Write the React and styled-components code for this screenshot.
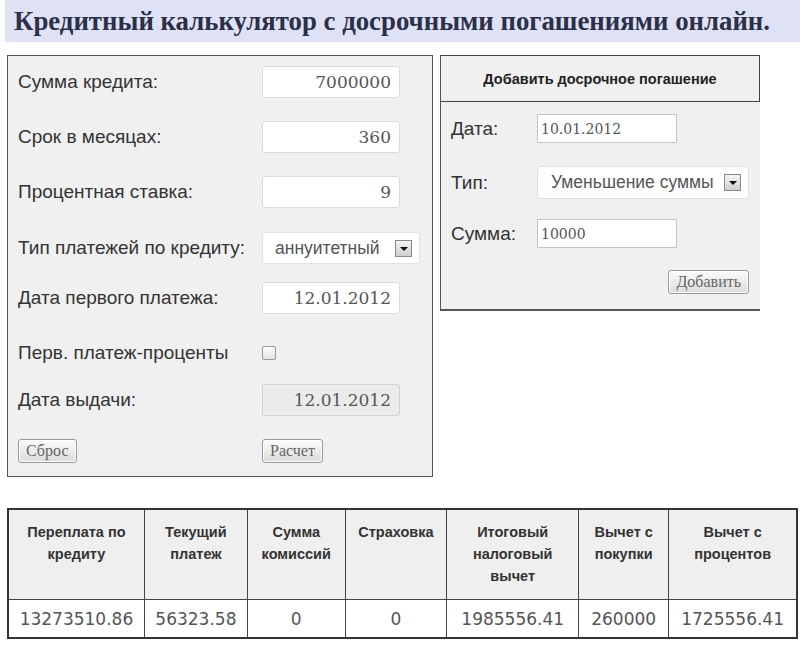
import styled, { createGlobalStyle } from 'styled-components';

const Global = createGlobalStyle`
  html, body {
    margin: 0;
    padding: 0;
    background: #ffffff;
  }
  body {
    width: 800px;
    height: 645px;
    overflow: hidden;
    font-family: "Liberation Sans", Arial, sans-serif;
  }
`;

const Page = styled.div`
  padding: 0 0 0 7px;
`;

const TitleBar = styled.div`
  margin-left: -2px;
  height: 42px;
  background: #dfe1f5;
  display: flex;
  align-items: center;
  padding-left: 9px;
  h1 {
    margin: 0;
    font-family: "Liberation Serif", "Times New Roman", serif;
    font-weight: bold;
    font-size: 26.8px;
    color: #2b3049;
    white-space: nowrap;
  }
`;

const TopRow = styled.div`
  display: flex;
  align-items: flex-start;
  gap: 7px;
  margin-top: 13px;
`;

const CalcPanel = styled.div`
  width: 424px;
  height: 420px;
  background: #f0f0f0;
  border: 1px solid #555;
  box-sizing: content-box;
`;

const Row = styled.div`
  display: flex;
  align-items: center;
  height: 32px;
  margin-top: ${p => p.$gap}px;
  padding-left: 10px;
`;

const Label = styled.div`
  width: ${p => p.$w || 244}px;
  font-size: 19px;
  color: #333;
  flex-shrink: 0;
  white-space: nowrap;
`;

const TextField = styled.div`
  width: 138px;
  height: 32px;
  box-sizing: border-box;
  background: ${p => (p.$disabled ? '#ebebeb' : '#fff')};
  border: 1px solid ${p => (p.$disabled ? '#d2d2d2' : '#dcdcdc')};
  border-radius: 3px;
  display: flex;
  align-items: center;
  justify-content: flex-end;
  padding-right: 8px;
  font-family: "DejaVu Serif", Georgia, serif;
  font-size: 17px;
  color: #555;
`;

const SelectBox = styled.div`
  width: ${p => p.$w}px;
  height: ${p => p.$h || 32}px;
  box-sizing: border-box;
  background: #fff;
  border: 1px solid #e0e0e0;
  border-radius: 3px;
  display: flex;
  align-items: center;
  justify-content: space-between;
  padding: 0 7px 0 ${p => p.$pl || 12}px;
  font-size: 17.5px;
  color: #555;
  white-space: nowrap;
`;

const Arrow = styled.span`
  width: 17px;
  height: 17px;
  box-sizing: border-box;
  border: 1px solid #888;
  background: linear-gradient(#f4f4f4, #cfcfcf);
  display: flex;
  align-items: center;
  justify-content: center;
  flex-shrink: 0;
  &::after {
    content: '';
    border-left: 4px solid transparent;
    border-right: 4px solid transparent;
    border-top: 4px solid #111;
    margin-top: 1px;
  }
`;

const Check = styled.span`
  width: 14px;
  height: 14px;
  box-sizing: border-box;
  border: 1px solid #999;
  border-radius: 2px;
  background: linear-gradient(#fdfdfd, #e4e4e4);
`;

const Button = styled.button`
  font-family: "Liberation Serif", "Times New Roman", serif;
  font-size: 16px;
  color: #666;
  padding: 0 7px;
  height: 24px;
  border: 1px solid #999;
  border-radius: 3px;
  background: linear-gradient(#fbfbfb, #dcdcdc);
  box-shadow: inset 0 0 0 1px #fff;
  cursor: pointer;
`;

const ButtonRow = styled.div`
  display: grid;
  grid-template-columns: ${p => p.$cols || '244px auto'};
  justify-content: ${p => p.$justify || 'start'};
  justify-items: start;
  align-items: center;
  margin-top: ${p => p.$gap}px;
  padding-left: ${p => p.$pl || 10}px;
  padding-right: ${p => p.$pr || 0}px;
`;

const EarlyPanel = styled.div`
  width: 319px;
  height: 254px;
  background: #f0f0f0;
  border-left: 1px solid #555;
  border-bottom: 2px solid #555;
`;

const EarlyHeader = styled.div`
  height: 45px;
  border: 1px solid #444;
  border-left: none;
  display: flex;
  align-items: center;
  justify-content: center;
  font-weight: bold;
  font-size: 14.5px;
  color: #222;
`;

const EarlyRow = styled.div`
  display: flex;
  align-items: center;
  margin-top: ${p => p.$gap}px;
  padding-left: 10px;
`;

const SmallField = styled.div`
  width: 140px;
  height: 29px;
  box-sizing: border-box;
  background: #fff;
  border: 1px solid #c4c4c4;
  display: flex;
  align-items: center;
  padding-left: 3px;
  font-family: "DejaVu Serif", Georgia, serif;
  font-size: 14px;
  color: #555;
`;

const ResultTable = styled.table`
  margin-top: 31px;
  width: 791px;
  border-collapse: collapse;
  border: 2px solid #333;
  th, td {
    border: 1px solid #444;
    text-align: center;
  }
  th {
    height: 78px;
    vertical-align: top;
    padding: 11px 4px 0;
    background: #efefef;
    font-size: 14.5px;
    line-height: 22px;
    font-weight: bold;
    color: #333;
  }
  td {
    height: 37px;
    padding: 0;
    font-family: "DejaVu Sans", Verdana, sans-serif;
    font-size: 17px;
    color: #555;
    background: #fff;
  }
`;

const columns = [
  { w: 136, title: ['Переплата по', 'кредиту'], value: '13273510.86' },
  { w: 103, title: ['Текущий', 'платеж'], value: '56323.58' },
  { w: 97, title: ['Сумма', 'комиссий'], value: '0' },
  { w: 100, title: ['Страховка'], value: '0' },
  { w: 135, title: ['Итоговый', 'налоговый', 'вычет'], value: '1985556.41' },
  { w: 91, title: ['Вычет с', 'покупки'], value: '260000' },
  { w: 129, title: ['Вычет с', 'процентов'], value: '1725556.41' },
];

export default function App() {
  return (
    <Page>
      <Global />
      <TitleBar>
        <h1>Кредитный калькулятор с досрочными погашениями онлайн.</h1>
      </TitleBar>
      <TopRow>
        <CalcPanel>
          <Row $gap={10}>
            <Label>Сумма кредита:</Label>
            <TextField>7000000</TextField>
          </Row>
          <Row $gap={23}>
            <Label>Срок в месяцах:</Label>
            <TextField>360</TextField>
          </Row>
          <Row $gap={23}>
            <Label>Процентная ставка:</Label>
            <TextField>9</TextField>
          </Row>
          <Row $gap={24}>
            <Label>Тип платежей по кредиту:</Label>
            <SelectBox $w={158}>
              аннуитетный
              <Arrow />
            </SelectBox>
          </Row>
          <Row $gap={18}>
            <Label>Дата первого платежа:</Label>
            <TextField>12.01.2012</TextField>
          </Row>
          <Row $gap={23}>
            <Label>Перв. платеж-проценты</Label>
            <Check />
          </Row>
          <Row $gap={15}>
            <Label>Дата выдачи:</Label>
            <TextField $disabled>12.01.2012</TextField>
          </Row>
          <ButtonRow $gap={23}>
            <Button>Сброс</Button>
            <Button>Расчет</Button>
          </ButtonRow>
        </CalcPanel>
        <EarlyPanel>
          <EarlyHeader>Добавить досрочное погашение</EarlyHeader>
          <EarlyRow $gap={12}>
            <Label $w={86}>Дата:</Label>
            <SmallField>10.01.2012</SmallField>
          </EarlyRow>
          <EarlyRow $gap={23}>
            <Label $w={86}>Тип:</Label>
            <SelectBox $w={212} $h={33} $pl={13}>
              Уменьшение суммы
              <Arrow />
            </SelectBox>
          </EarlyRow>
          <EarlyRow $gap={20}>
            <Label $w={86}>Сумма:</Label>
            <SmallField>10000</SmallField>
          </EarlyRow>
          <ButtonRow $gap={22} $cols="auto" $justify="end" $pr={11}>
            <Button>Добавить</Button>
          </ButtonRow>
        </EarlyPanel>
      </TopRow>
      <ResultTable>
        <thead>
          <tr>
            {columns.map(c => (
              <th key={c.value + c.w} style={{ width: c.w }}>
                {c.title.map((line, i) => (
                  <div key={i}>{line}</div>
                ))}
              </th>
            ))}
          </tr>
        </thead>
        <tbody>
          <tr>
            {columns.map(c => (
              <td key={c.value + c.w}>{c.value}</td>
            ))}
          </tr>
        </tbody>
      </ResultTable>
    </Page>
  );
}
